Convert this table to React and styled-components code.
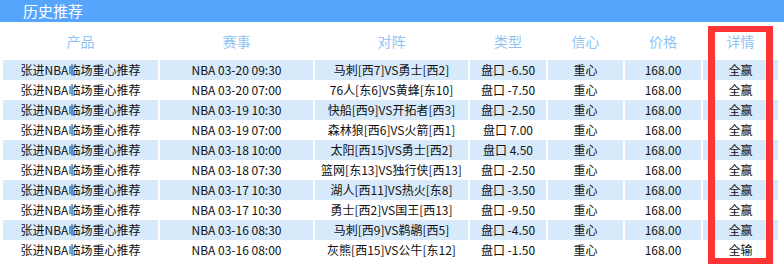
import React from "react";
import styled, { createGlobalStyle } from "styled-components";

const Global = createGlobalStyle`
  html, body { margin: 0; padding: 0; background: #fff; }
  body { font-family: "Noto Sans CJK SC", "Noto Sans", sans-serif; }
`;

const Page = styled.div`
  position: relative;
  width: 784px;
  height: 264px;
  overflow: hidden;
  background: #fff;
`;

const TitleBar = styled.div`
  height: 22px;
  line-height: 22px;
  background: #55a5fd;
  color: #fff;
  font-size: 15px;
  padding-left: 23px;
`;

const Table = styled.table`
  margin-left: 1px;
  width: 779px;
  table-layout: fixed;
  border-collapse: separate;
  border-spacing: 2px 0;
`;

const Th = styled.th`
  height: 38px;
  padding: 0;
  font-weight: normal;
  font-size: 14px;
  color: #8fc3f6;
  text-align: center;
  vertical-align: middle;
`;

const Row = styled.tr`
  background: transparent;
`;

const Td = styled.td`
  height: 20px;
  padding: 0;
  font-size: 12px;
  line-height: 20px;
  color: #111;
  text-align: center;
  white-space: nowrap;
  overflow: hidden;
  background: ${(p) => (p.$striped ? "#d6eafc" : "#fff")};
`;

const Highlight = styled.div`
  position: absolute;
  left: 708px;
  top: 26px;
  width: 65px;
  height: 238px;
  box-sizing: border-box;
  border-style: solid;
  border-color: #ff3434;
  border-width: 6px 7px;
  pointer-events: none;
`;

const widths = [155, 153, 153, 76, 75, 76, 75];
const headers = ["产品", "赛事", "对阵", "类型", "信心", "价格", "详情"];

const rows = [
  ["NBA 03-20 09:30", "马刺[西7]VS勇士[西2]", "盘口 -6.50", "全赢"],
  ["NBA 03-20 07:00", "76人[东6]VS黄蜂[东10]", "盘口 -7.50", "全赢"],
  ["NBA 03-19 10:30", "快船[西9]VS开拓者[西3]", "盘口 -2.50", "全赢"],
  ["NBA 03-19 07:00", "森林狼[西6]VS火箭[西1]", "盘口 7.00", "全赢"],
  ["NBA 03-18 10:00", "太阳[西15]VS勇士[西2]", "盘口 4.50", "全赢"],
  ["NBA 03-18 07:30", "篮网[东13]VS独行侠[西13]", "盘口 -2.50", "全赢"],
  ["NBA 03-17 10:30", "湖人[西11]VS热火[东8]", "盘口 -3.50", "全赢"],
  ["NBA 03-17 10:30", "勇士[西2]VS国王[西13]", "盘口 -9.50", "全赢"],
  ["NBA 03-16 08:30", "马刺[西9]VS鹈鹕[西5]", "盘口 -4.50", "全赢"],
  ["NBA 03-16 08:00", "灰熊[西15]VS公牛[东12]", "盘口 -1.50", "全输"],
];

export default function App() {
  return (
    <Page>
      <Global />
      <TitleBar>历史推荐</TitleBar>
      <Table>
        <colgroup>
          {widths.map((w, i) => (
            <col key={i} style={{ width: w }} />
          ))}
        </colgroup>
        <thead>
          <tr>
            {headers.map((h) => (
              <Th key={h}>{h}</Th>
            ))}
          </tr>
        </thead>
        <tbody>
          {rows.map((r, i) => {
            const s = i % 2 === 0;
            return (
              <Row key={i}>
                <Td $striped={s}>张进NBA临场重心推荐</Td>
                <Td $striped={s}>{r[0]}</Td>
                <Td $striped={s}>{r[1]}</Td>
                <Td $striped={s}>{r[2]}</Td>
                <Td $striped={s}>重心</Td>
                <Td $striped={s}>168.00</Td>
                <Td $striped={s}>{r[3]}</Td>
              </Row>
            );
          })}
        </tbody>
      </Table>
      <Highlight />
    </Page>
  );
}
